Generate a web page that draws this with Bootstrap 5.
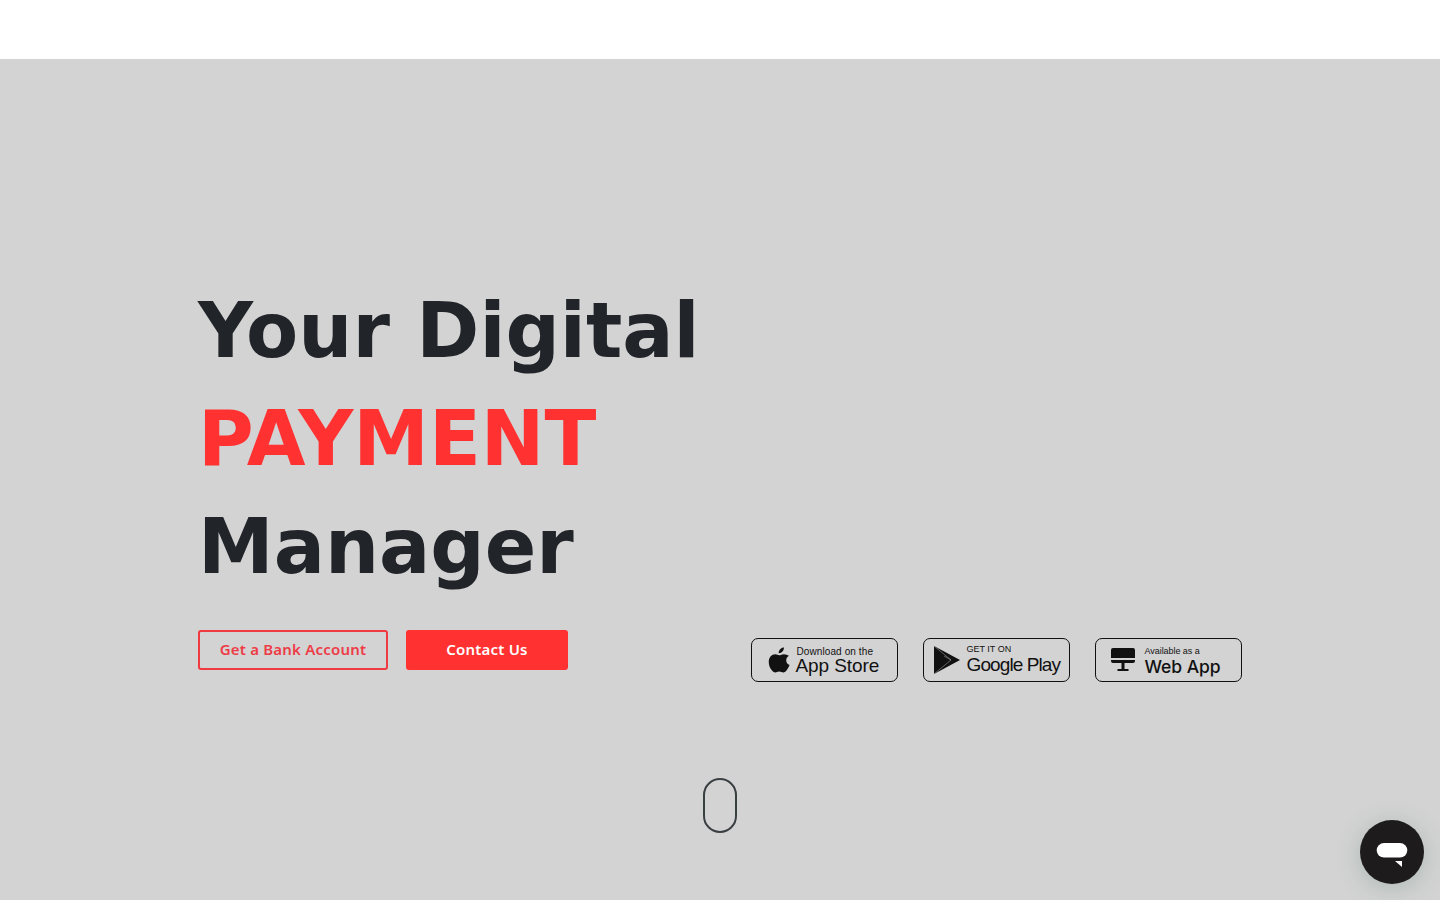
<!DOCTYPE html>
<html lang="en">
<head>
<meta charset="utf-8">
<title>Your Digital Payment Manager</title>
<link href="https://cdn.jsdelivr.net/npm/bootstrap@5.3.0/dist/css/bootstrap.min.css" rel="stylesheet">
<style>
body { background:#fff; overflow:hidden; font-family:"DejaVu Sans",sans-serif; }
.top-strip { height:59px; background:#fff; }
.hero-area { height:841px; background:#d3d3d3; padding-top:218px; }
.hero-inner { width:1044px; }
.hero-title { font-family:"DejaVu Sans",sans-serif; font-size:76px; font-weight:700; line-height:108px; color:#212529; margin:0 0 29px; }
.hero-red { color:#ff3131; }
.cta-group { gap:18px; }
.cta { font-family:"Noto Sans",sans-serif; font-size:15px; font-weight:600; letter-spacing:.2px; line-height:1; height:40px; border-radius:3px; display:inline-flex; align-items:center; justify-content:center; padding:0 0 2px; }
.cta-outline { width:190px; border:2px solid #f03a3f; color:#ee3b46; background:transparent; }
.cta-solid { width:162px; border:2px solid #ff3131; background:#ff3131; color:#fff; }
.store-row { gap:25px; margin-bottom:-12px; }
.store-badge { width:147px; height:44px; border:1.5px solid #111; border-radius:7px; color:#111; font-family:"Liberation Sans",sans-serif; text-decoration:none; }
.store-small { font-size:9px; line-height:10px; }
.store-big { font-size:19px; line-height:19px; letter-spacing:-.1px; }
.apple-icon { margin-left:15.500px; margin-right:5px; }
.apple-small { font-size:10px; letter-spacing:.1px; margin-top:1px; margin-bottom:-1px; margin-left:1px; }
.play-icon { margin-left:8.500px; margin-right:6px; }
.play-text { margin-top:-3px; }
.play-big { letter-spacing:-.9px; margin-top:1px; margin-bottom:-1px; }
.web-icon { margin-left:14.500px; margin-right:10px; }
.web-text { margin-top:2px; }
.web-small { letter-spacing:-.05px; margin-bottom:1px; }
.web-big { font-family:"Inter",sans-serif; font-weight:500; font-size:17.500px; letter-spacing:-.05px; line-height:20px; margin-bottom:-1px; }
.mouse-shape { width:34px; height:55px; border:2px solid #3a3f42; border-radius:17px; margin:108px auto 0; }
.chat-bubble { position:fixed; right:16px; bottom:16px; width:64px; height:64px; border-radius:50%; background:#1d1b1b; box-shadow:0 4px 24px rgba(60,110,90,.25); }
</style>
</head>
<body>
<div class="top-strip"></div>
<main class="hero-area">
  <div class="hero-inner mx-auto">
    <h1 class="hero-title">Your Digital<br><span class="hero-red">PAYMENT</span><br>Manager</h1>
    <div class="d-flex justify-content-between align-items-end">
      <div class="d-flex cta-group">
        <a href="#" class="btn cta cta-outline">Get a Bank Account</a>
        <a href="#" class="btn cta cta-solid">Contact Us</a>
      </div>
      <div class="d-flex store-row">
        <a href="#" class="store-badge d-flex align-items-center">
          <svg class="apple-icon flex-shrink-0" width="23" height="28" viewBox="0 0 24 28"><path fill="#111" d="M16.600 1c.1 1.900-.6 3.100-1.500 4.100-1 1.100-2.300 1.900-3.900 1.800-.2-1.600.6-3.100 1.500-4.100C13.700 1.700 15.300 1 16.600 1zM21.800 9.500c-1.900 1.200-2.800 2.700-2.800 4.700 0 2.400 1.300 4 3.500 5-.8 2.300-2 4.300-3.400 6-1 1.200-2 1.800-3.200 1.800-1.500 0-2.400-.9-4.200-.9s-2.800.9-4.200.9c-1.300 0-2.400-.8-3.500-2.200C1.900 22.400.8 19 .8 16c0-4.800 3-8 6.800-8 1.600 0 3 1 4.200 1s2.800-1.100 4.700-1.100c2.100 0 4 .9 5.300 1.600z"/></svg>
          <span><span class="store-small apple-small d-block">Download on the</span><span class="store-big d-block">App Store</span></span>
        </a>
        <a href="#" class="store-badge d-flex align-items-center">
          <svg class="play-icon flex-shrink-0" width="28" height="30" viewBox="0 0 28 30"><path fill="#111" d="M1 1l26 14L1 29z"/><path fill="none" stroke="#999" stroke-width=".6" d="M1 1l17 14L1 29M18 15l-7-4"/></svg>
          <span class="play-text"><span class="store-small d-block">GET IT ON</span><span class="store-big play-big d-block">Google Play</span></span>
        </a>
        <a href="#" class="store-badge d-flex align-items-center">
          <svg class="web-icon flex-shrink-0" width="24" height="24" viewBox="0 0 24 24"><path fill="#111" d="M2 0h20a2 2 0 0 1 2 2v8H0V2a2 2 0 0 1 2-2zM0 12h24v1a2 2 0 0 1-2 2H2a2 2 0 0 1-2-2zM10.500 15h3v6h4v2h-11v-2h4z"/></svg>
          <span class="web-text"><span class="store-small web-small d-block">Available as a</span><span class="store-big web-big d-block">Web App</span></span>
        </a>
      </div>
    </div>
    <div class="mouse-shape"></div>
  </div>
</main>
<a href="#" class="chat-bubble d-flex align-items-center justify-content-center" aria-label="Chat">
  <svg width="32" height="30" viewBox="0 0 32 30"><path fill="#fff" d="M8 6h16a7.300 7.300 0 0 1 0 14.600H8A7.300 7.300 0 0 1 8 6z"/><path fill="#fff" d="M19 24h7v6z"/></svg>
</a>
<script src="https://cdn.jsdelivr.net/npm/bootstrap@5.3.0/dist/js/bootstrap.bundle.min.js"></script>
</body>
</html>
